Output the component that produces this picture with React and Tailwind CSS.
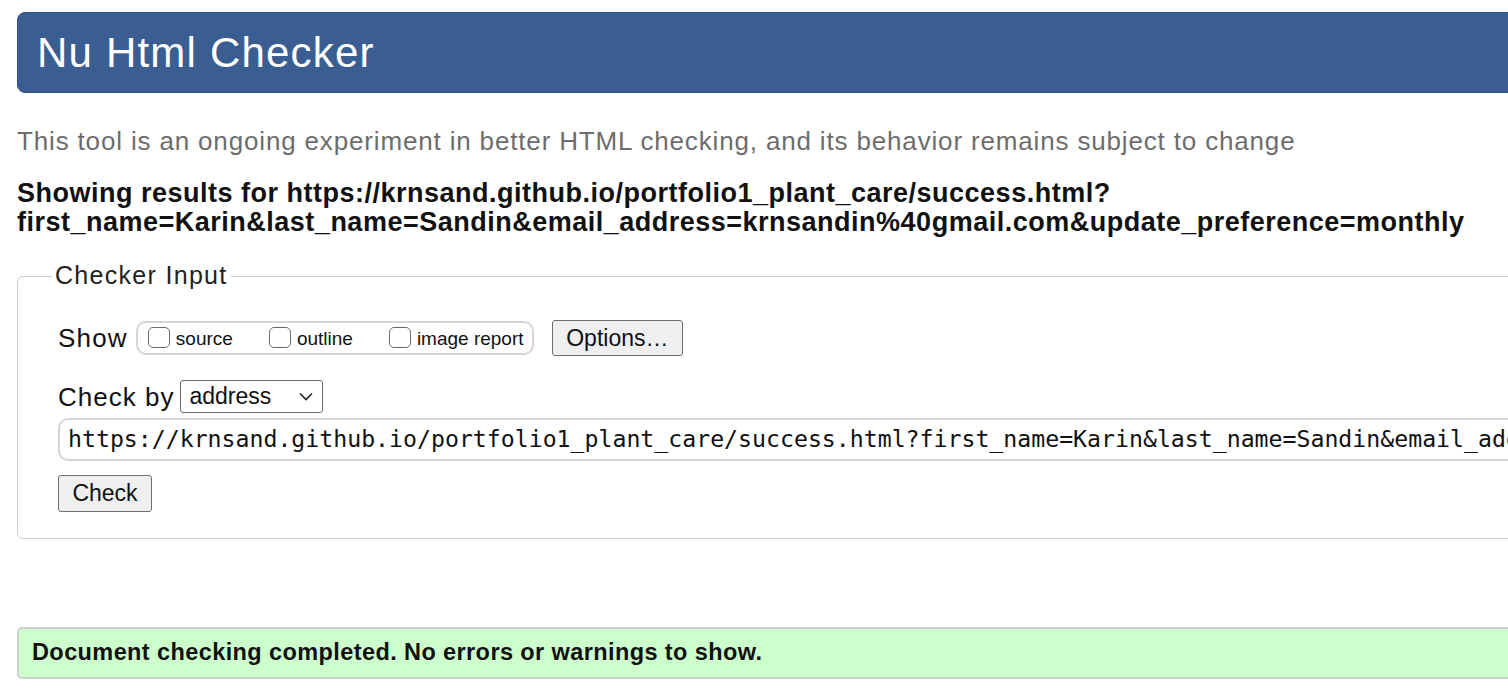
import React from 'react';

const URL_TEXT =
  'https://krnsand.github.io/portfolio1_plant_care/success.html?first_name=Karin&last_name=Sandin&email_address=krnsandin%40gmail.com&update_preference=monthly';

function Checkbox({ label }) {
  return (
    <label className="flex items-end gap-[6px]">
      <span className="w-[22px] h-[21px] rounded-[5px] border border-[#6b6b6b] bg-white" />
      <span className="text-[19px] leading-[19px] text-[#111]">{label}</span>
    </label>
  );
}

export default function App() {
  return (
    <div className="w-[1508px] h-[690px] overflow-hidden bg-white font-['Liberation_Sans',Arial,sans-serif]">
      <div className="w-[1620px] pl-[17px] pt-[12px]">
        {/* header bar */}
        <div className="h-[81px] bg-[#3a5e91] border border-[#2d5287] rounded-l-[8px] flex items-center pl-[19px]">
          <h1 className="text-[42px] leading-none text-white tracking-[1.2px]">Nu Html Checker</h1>
        </div>

        <p className="mt-[33px] text-[26px] leading-[30px] text-[#6d6d6d] tracking-[0.84px]">
          This tool is an ongoing experiment in better HTML checking, and its behavior remains subject to change
        </p>

        <p className="mt-[23px] w-[1500px] text-[27px] leading-[29px] font-bold text-[#111] tracking-[0.5px]">
          Showing results for https://krnsand.github.io/portfolio1_plant_care/success.html?
          <br />
          first_name=Karin&amp;last_name=Sandin&amp;email_address=krnsandin%40gmail.com&amp;update_preference=monthly
        </p>

        {/* checker input fieldset */}
        <div className="relative mt-[39px] h-[263px] border border-[#cccccc] rounded-[6px] pl-[40px] pt-[43px]">
          <span className="absolute left-[34px] top-[-16px] bg-white px-[3px] text-[25px] leading-[28px] text-[#222] tracking-[1.3px]">
            Checker Input
          </span>

          <div className="flex items-center">
            <span className="text-[26px] leading-[30px] text-[#111] tracking-[1.2px]">Show</span>
            <div className="ml-[8px] h-[34px] w-[398px] border-2 border-[#d6d6d6] rounded-[10px] flex items-center pl-[10px] pb-[2px]">
              <div className="flex items-center gap-[36px]">
                <Checkbox label="source" />
                <Checkbox label="outline" />
                <Checkbox label="image report" />
              </div>
            </div>
            <button className="ml-[18px] h-[36px] w-[131px] border border-[#6f6f6f] rounded-[3px] bg-[#efefef] text-[23px] text-[#111]">
              Options…
            </button>
          </div>

          <div className="mt-[24px] flex items-center">
            <span className="text-[26px] leading-[30px] text-[#111] tracking-[1px]">Check by</span>
            <div className="ml-[6px] h-[33px] w-[143px] border border-[#6f6f6f] rounded-[3px] bg-white flex items-center justify-between pl-[8px] pr-[9px]">
              <span className="text-[23px] text-[#111]">address</span>
              <svg width="14" height="9" viewBox="0 0 14 9" fill="none" stroke="#222" strokeWidth="1.6">
                <path d="M1 1.5 L7 7.5 L13 1.5" />
              </svg>
            </div>
          </div>

          <div className="mt-[5px] h-[43px] border-2 border-[#d6d6d6] rounded-[10px] flex items-center pl-[8px] overflow-hidden whitespace-nowrap">
            <span className="font-['DejaVu_Sans_Mono',monospace] text-[23.2px] text-[#111]">{URL_TEXT}</span>
          </div>

          <button className="mt-[14px] h-[37px] w-[94px] border border-[#6f6f6f] rounded-[3px] bg-[#efefef] text-[23px] text-[#111]">
            Check
          </button>
        </div>

        {/* success message */}
        <div className="mt-[88px] h-[52px] border-2 border-[#cfcfcf] rounded-[5px] bg-[#ccffcc] flex items-center pl-[13px]">
          <span className="text-[23.5px] font-bold text-[#111] tracking-[0.4px]">
            Document checking completed. No errors or warnings to show.
          </span>
        </div>
      </div>
    </div>
  );
}
